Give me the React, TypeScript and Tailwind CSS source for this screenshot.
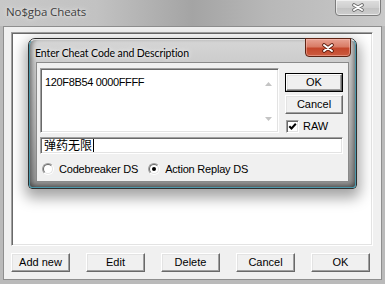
import React from "react";

const sys = "font-['Liberation_Sans','Noto_Sans_CJK_SC',sans-serif]";
const raised =
  "bg-[#f0f0f0] border border-t-white border-l-white border-r-[#696969] border-b-[#696969] shadow-[inset_-1px_-1px_0_#a0a0a0,inset_1px_1px_0_#e3e3e3]";
const sunken =
  "border border-t-[#a0a0a0] border-l-[#a0a0a0] border-r-white border-b-white shadow-[inset_1px_1px_0_#696969,inset_-1px_-1px_0_#e3e3e3]";

function XGlyph({ outline, w, h }: { outline: string; w: number; h: number }) {
  return (
    <svg width={w} height={h} viewBox={`0 0 ${w} ${h}`}>
      <path
        d={`M2 2 L${w - 2} ${h - 2} M${w - 2} 2 L2 ${h - 2}`}
        stroke={outline}
        strokeWidth="3.6"
        strokeLinecap="round"
      />
      <path
        d={`M2 2 L${w - 2} ${h - 2} M${w - 2} 2 L2 ${h - 2}`}
        stroke="#ffffff"
        strokeWidth="2"
        strokeLinecap="round"
      />
    </svg>
  );
}

function Btn({ label, className = "" }: { label: string; className?: string }) {
  return (
    <div
      className={`${raised} ${className} flex items-center justify-center text-[11px] leading-[13px] text-black`}
    >
      {label}
    </div>
  );
}

function Radio({ checked }: { checked?: boolean }) {
  return (
    <div className="w-[12px] h-[12px] rounded-full border border-t-[#a0a0a0] border-l-[#a0a0a0] border-r-white border-b-white shrink-0">
      <div className="w-full h-full rounded-full border border-t-[#696969] border-l-[#696969] border-r-[#e3e3e3] border-b-[#e3e3e3] bg-white flex items-center justify-center">
        {checked && <div className="w-[4px] h-[4px] rounded-full bg-black" />}
      </div>
    </div>
  );
}

export default function App() {
  return (
    <div className={`relative w-[385px] h-[284px] overflow-hidden flex flex-col bg-[#bababa] ${sys}`}>
      {/* Outer title bar */}
      <div className="h-[26px] shrink-0 flex items-start bg-[linear-gradient(to_right,#c8c8c8_0%,#c2c2c2_25%,#a4a4a4_50%,#b8b8b8_70%,#c9c9c9_100%)]">
        <span className="ml-[6px] mt-[4px] text-[11.5px] leading-[16px] text-[#3f3f3f] font-['Open_Sans',sans-serif] tracking-[-0.1px] [text-shadow:0_0_6px_#e6e6e6,0_0_3px_#e6e6e6]">
          No$gba Cheats
        </span>
        <div className="ml-auto mr-[4px] mt-[-1px] w-[46px] h-[17px] rounded-b-[4px] border border-[#7c7c7c] bg-[linear-gradient(to_bottom,#dedede,#cfcfcf_50%,#c3c3c3_55%,#cdcdcd)] shadow-[inset_0_0_0_1px_rgba(255,255,255,0.55)] flex items-center justify-center">
          <XGlyph outline="#6a6a6a" w={12} h={9} />
        </div>
      </div>

      {/* Outer client */}
      <div className="mx-[3px] border border-[#8e8e8e] bg-[#f0f0f0] flex flex-col pt-[5px] pb-[7px] pl-[7px]">
        <div className={`w-[362px] h-[214px] bg-white ${sunken}`} />
        <div className="mt-[7px] flex gap-[16px]">
          <Btn label="Add new" className="w-[59px] h-[19px]" />
          <Btn label="Edit" className="w-[59px] h-[19px]" />
          <Btn label="Delete" className="w-[59px] h-[19px]" />
          <Btn label="Cancel" className="w-[59px] h-[19px]" />
          <Btn label="OK" className="w-[59px] h-[19px]" />
        </div>
      </div>

      {/* Inner dialog */}
      <div className="absolute left-[28px] top-[38px] w-[329px] h-[151px] rounded-t-[7px] rounded-b-[4px] border border-[#2e2e2e] shadow-[0_6px_14px_3px_rgba(0,0,0,0.36)] bg-[linear-gradient(to_bottom,#d6d6d6,#cdcdcd_22px,#b4b4b4_60%,#939393)]">
        <div className="w-full h-full rounded-t-[6px] rounded-b-[3px] border border-t-[#e4e4e4] border-l-[#4a98ab] border-r-[#4a98ab] border-b-[#4a98ab] shadow-[inset_5px_0_5px_-3px_rgba(40,40,40,0.5),inset_-5px_0_5px_-3px_rgba(40,40,40,0.5),inset_0_-5px_5px_-3px_rgba(40,40,40,0.5)] flex flex-col">
          {/* title */}
          <div className="h-[22px] shrink-0 flex items-start">
            <span className="ml-[5px] mt-[5px] text-[10.5px] leading-[16px] tracking-[-0.1px] text-black font-['Lato',sans-serif] [text-shadow:0_0_6px_#f2f2f2,0_0_3px_#f2f2f2]">
              Enter Cheat Code and Description
            </span>
            <div className="ml-auto mr-[4px] mt-[-2px] w-[46px] h-[19px] rounded-b-[4px] border border-[#5e2414] bg-[linear-gradient(to_bottom,#e8a293,#d97c66_45%,#c4472c_55%,#cc5c40)] shadow-[inset_0_0_0_1px_rgba(255,200,190,0.45)] flex items-center justify-center">
              <XGlyph outline="#5a1a0c" w={12} h={10} />
            </div>
          </div>
          {/* client */}
          <div className="mx-[6px] border border-[#8a8a8a] bg-[#f0f0f0] flex flex-col pt-[5px] pl-[3px]">
            <div className="flex h-[65px]">
              <div className={`w-[239px] h-[65px] bg-white flex ${sunken} p-[1px]`}>
                <div className="flex-1 pl-[3px] pt-[6px] text-[11px] leading-[13px] tracking-[-0.35px] text-black">
                  120F8B54 0000FFFF
                </div>
                <div className="w-[17px] flex flex-col items-center justify-between pt-[12px] pb-[10px]">
                  <svg width="7" height="4" viewBox="0 0 7 4">
                    <polygon points="0,4 3.5,0 7,4" fill="#c4c4c4" />
                  </svg>
                  <svg width="7" height="4" viewBox="0 0 7 4">
                    <polygon points="0,0 7,0 3.5,4" fill="#c4c4c4" />
                  </svg>
                </div>
              </div>
              <div className="ml-[6px] pt-[5px] flex flex-col">
                <div className="w-[58px] h-[19px] border border-black">
                  <Btn label="OK" className="w-full h-full" />
                </div>
                <Btn label="Cancel" className="mt-[3px] w-[58px] h-[20px]" />
                <div className="mt-[6px] ml-[1px] flex items-center">
                  <div className={`w-[13px] h-[13px] bg-white ${sunken} flex items-center justify-center`}>
                    <svg width="9" height="9" viewBox="0 0 9 9">
                      <path d="M1.3 4.2 L3.5 6.5 L7.8 1.8" stroke="#000" strokeWidth="2" fill="none" />
                    </svg>
                  </div>
                  <span className="ml-[4px] text-[11px] leading-[13px] text-black">RAW</span>
                </div>
              </div>
            </div>
            <div className={`mt-[4px] w-[303px] h-[17px] bg-white ${sunken} flex items-center pl-[3px]`}>
              <span className="text-[12px] leading-[14px] text-black">弹药无限</span>
              <span className="ml-[1px] w-[1px] h-[13px] bg-black" />
            </div>
            <div className="mt-[9px] mb-[6px] ml-[2px] flex items-center h-[12px] tracking-[-0.2px]">
              <Radio />
              <span className="ml-[5px] text-[11px] leading-[13px] text-black">Codebreaker DS</span>
              <div className="ml-[10px]">
                <Radio checked />
              </div>
              <span className="ml-[5px] text-[11px] leading-[13px] text-black">Action Replay DS</span>
            </div>
          </div>
        </div>
      </div>
    </div>
  );
}
